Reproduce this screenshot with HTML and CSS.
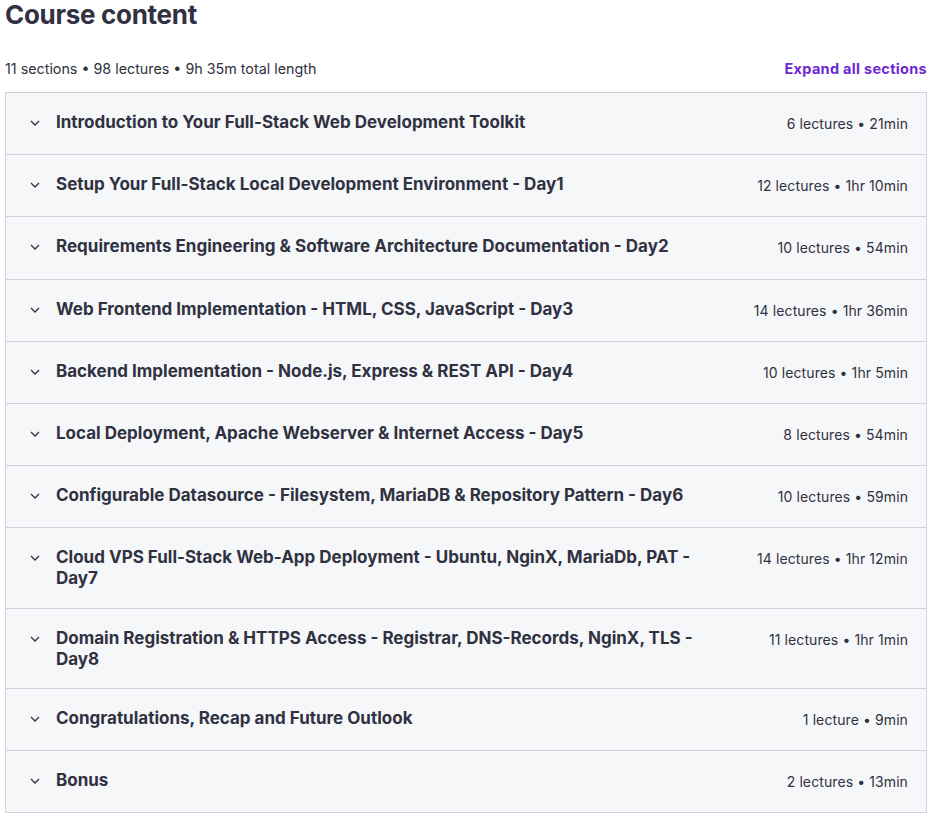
FILE: index.html
```html
<!DOCTYPE html>
<html lang="en">
<head>
    <meta charset="UTF-8">
    <meta name="viewport" content="width=device-width, initial-scale=1.0">
    <title>Course content</title>
    <link rel="stylesheet" href="styles.css">
</head>
<body>
    <h2 class="page-title">Course content</h2>

    <div class="content-header">
        <span class="stats">11 sections • 98 lectures • 9h 35m total length</span>
        <button class="expand-btn" type="button">Expand all sections</button>
    </div>

    <div class="sections">
        <div class="section">
            <div class="section-title">
                <svg class="chevron" viewBox="0 0 10 6" width="10" height="6"><path d="M1 1l4 4 4-4"/></svg>
                <span class="title-text">Introduction to Your Full-Stack Web Development Toolkit</span>
            </div>
            <span class="section-meta">6 lectures • 21min</span>
        </div>
        <div class="section">
            <div class="section-title">
                <svg class="chevron" viewBox="0 0 10 6" width="10" height="6"><path d="M1 1l4 4 4-4"/></svg>
                <span class="title-text">Setup Your Full-Stack Local Development Environment - Day1</span>
            </div>
            <span class="section-meta">12 lectures • 1hr 10min</span>
        </div>
        <div class="section">
            <div class="section-title">
                <svg class="chevron" viewBox="0 0 10 6" width="10" height="6"><path d="M1 1l4 4 4-4"/></svg>
                <span class="title-text">Requirements Engineering &amp; Software Architecture Documentation - Day2</span>
            </div>
            <span class="section-meta">10 lectures • 54min</span>
        </div>
        <div class="section">
            <div class="section-title">
                <svg class="chevron" viewBox="0 0 10 6" width="10" height="6"><path d="M1 1l4 4 4-4"/></svg>
                <span class="title-text">Web Frontend Implementation - HTML, CSS, JavaScript - Day3</span>
            </div>
            <span class="section-meta">14 lectures • 1hr 36min</span>
        </div>
        <div class="section">
            <div class="section-title">
                <svg class="chevron" viewBox="0 0 10 6" width="10" height="6"><path d="M1 1l4 4 4-4"/></svg>
                <span class="title-text">Backend Implementation - Node.js, Express &amp; REST API - Day4</span>
            </div>
            <span class="section-meta">10 lectures • 1hr 5min</span>
        </div>
        <div class="section">
            <div class="section-title">
                <svg class="chevron" viewBox="0 0 10 6" width="10" height="6"><path d="M1 1l4 4 4-4"/></svg>
                <span class="title-text">Local Deployment, Apache Webserver &amp; Internet Access - Day5</span>
            </div>
            <span class="section-meta">8 lectures • 54min</span>
        </div>
        <div class="section">
            <div class="section-title">
                <svg class="chevron" viewBox="0 0 10 6" width="10" height="6"><path d="M1 1l4 4 4-4"/></svg>
                <span class="title-text">Configurable Datasource - Filesystem, MariaDB &amp; Repository Pattern - Day6</span>
            </div>
            <span class="section-meta">10 lectures • 59min</span>
        </div>
        <div class="section">
            <div class="section-title">
                <svg class="chevron" viewBox="0 0 10 6" width="10" height="6"><path d="M1 1l4 4 4-4"/></svg>
                <span class="title-text">Cloud VPS Full-Stack Web-App Deployment - Ubuntu, NginX, MariaDb, PAT - Day7</span>
            </div>
            <span class="section-meta">14 lectures • 1hr 12min</span>
        </div>
        <div class="section">
            <div class="section-title">
                <svg class="chevron" viewBox="0 0 10 6" width="10" height="6"><path d="M1 1l4 4 4-4"/></svg>
                <span class="title-text">Domain Registration &amp; HTTPS Access - Registrar, DNS-Records, NginX, TLS - Day8</span>
            </div>
            <span class="section-meta">11 lectures • 1hr 1min</span>
        </div>
        <div class="section">
            <div class="section-title">
                <svg class="chevron" viewBox="0 0 10 6" width="10" height="6"><path d="M1 1l4 4 4-4"/></svg>
                <span class="title-text">Congratulations, Recap and Future Outlook</span>
            </div>
            <span class="section-meta">1 lecture • 9min</span>
        </div>
        <div class="section">
            <div class="section-title">
                <svg class="chevron" viewBox="0 0 10 6" width="10" height="6"><path d="M1 1l4 4 4-4"/></svg>
                <span class="title-text">Bonus</span>
            </div>
            <span class="section-meta">2 lectures • 13min</span>
        </div>
    </div>
</body>
</html>
```

FILE: styles.css
```css
/* General Styles */
body {
    font-family: Inter, "Liberation Sans", sans-serif;
    margin: 0;
    padding: 0 5px;
    background-color: #fff;
    color: #303141;
}

/* Heading */
.page-title {
    font-size: 26px;
    font-weight: 700;
    line-height: 30px;
    margin: 0;
    letter-spacing: -0.3px;
}

/* Stats row */
.content-header {
    display: flex;
    justify-content: space-between;
    align-items: center;
    margin-top: 29px;
    margin-bottom: 13px;
}

.stats {
    font-size: 14.3px;
    line-height: 20px;
}

.expand-btn {
    font-family: inherit;
    font-size: 14.5px;
    font-weight: 700;
    line-height: 20px;
    letter-spacing: 0.3px;
    color: #6d28d2;
    background: none;
    border: none;
    padding: 0;
    cursor: pointer;
}

/* Sections list */
.sections {
    border: 1px solid #d1d2e0;
    border-bottom: none;
}

.section {
    box-sizing: border-box;
    min-height: 62.2px;
    display: flex;
    justify-content: space-between;
    align-items: flex-start;
    gap: 40px;
    background-color: #f6f7f9;
    border-bottom: 1px solid #d1d2e0;
    padding: 19px 18px 18.2px 24px;
}

.section-title {
    display: flex;
    align-items: flex-start;
    font-size: 17px;
    font-weight: 700;
    line-height: 21px;
}

.chevron {
    flex-shrink: 0;
    margin: 8px 16px 0 0;
    fill: none;
    stroke: #303141;
    stroke-width: 1.3;
}

.section-meta {
    flex-shrink: 0;
    font-size: 14px;
    line-height: 21px;
    letter-spacing: 0.1px;
    white-space: nowrap;
    padding-top: 1px;
}
```
